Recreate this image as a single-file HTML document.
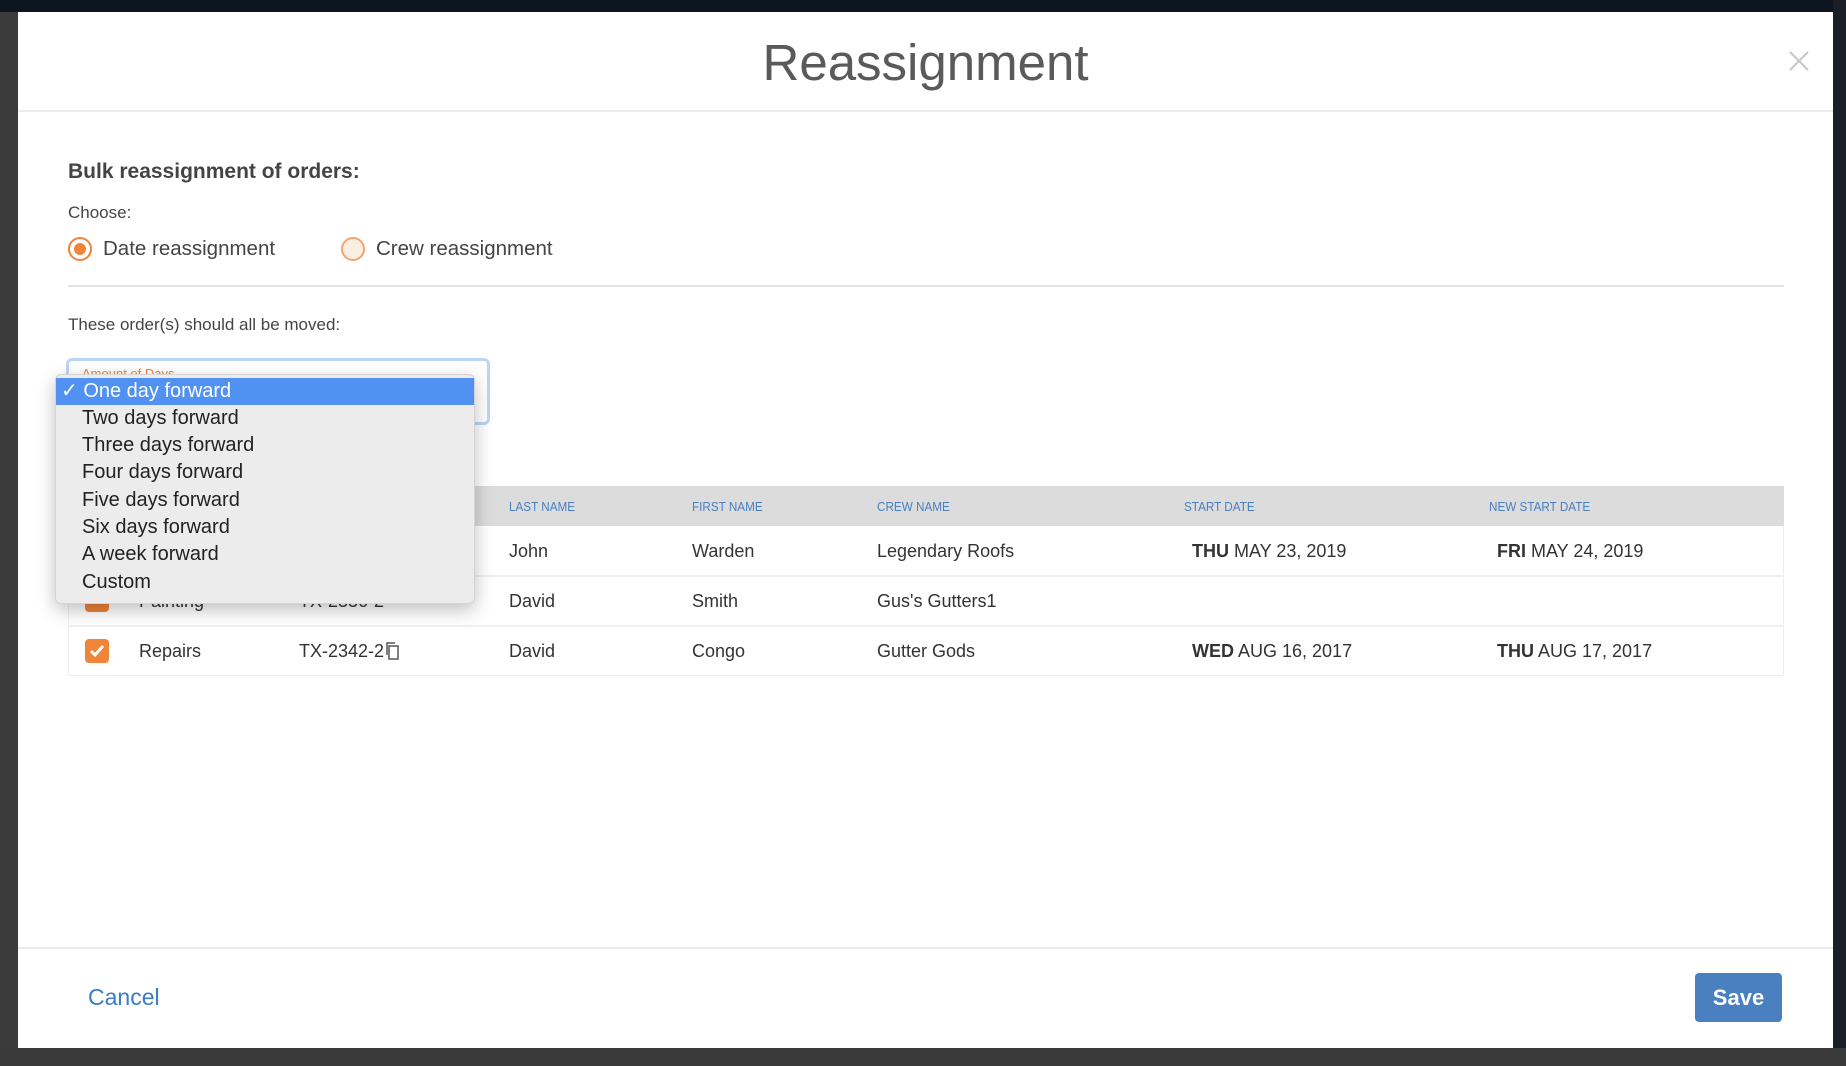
<!DOCTYPE html>
<html><head><meta charset="utf-8"><style>
*{margin:0;padding:0;box-sizing:border-box}
body{width:1846px;height:1066px;overflow:hidden;background:#3b3b3b;font-family:"Liberation Sans",sans-serif;position:relative;color:#333}
.a{position:absolute;white-space:nowrap}
#top{left:0;top:0;width:1846px;height:12px;background:#0d1520}
#modal{left:18px;top:12px;width:1815px;height:1036px;background:#fff}
.t{font-size:18px;color:#333;line-height:20px}
.h{font-size:13px;color:#4a7fc0;line-height:14px;transform:scaleX(.9);transform-origin:left}
.d b{font-weight:bold}
.ck{width:24px;height:24px;border-radius:4px;background:#f08437}
.dd{font-size:20px;line-height:27px;color:#222;left:82px}
</style></head><body>
<div class="a" id="top"></div>
<div class="a" style="left:1833px;top:0;width:13px;height:1066px;background:#1a1f27"></div>
<div class="a" style="left:0;top:1048px;width:1846px;height:18px;background:#3a3a3a"></div>
<div class="a" id="modal"></div>
<div class="a" style="left:18px;top:32px;width:1815px;text-align:center;font-size:51px;font-weight:normal;color:#5a5a5a;line-height:62px;letter-spacing:0">Reassignment</div>
<svg class="a" style="left:1789px;top:51px" width="20" height="20"><path d="M1 1L19 19M19 1L1 19" stroke="#c8c8c8" stroke-width="2"/></svg>
<div class="a" style="left:18px;top:110px;width:1815px;height:2px;background:#ececec"></div>
<div class="a" style="left:68px;top:160px;font-size:21px;font-weight:bold;color:#444">Bulk reassignment of orders:</div>
<div class="a" style="left:68px;top:203px;font-size:17px;color:#444">Choose:</div>
<div class="a" style="left:68px;top:237px;width:24px;height:24px;border-radius:50%;border:2px solid #f08437;background:#fff"></div>
<div class="a" style="left:74px;top:243px;width:12px;height:12px;border-radius:50%;background:#f08437"></div>
<div class="a" style="left:103px;top:237px;font-size:20.5px;color:#444">Date reassignment</div>
<div class="a" style="left:341px;top:237px;width:24px;height:24px;border-radius:50%;border:2px solid #f3a570;background:#fdeee4"></div>
<div class="a" style="left:376px;top:237px;font-size:20.5px;color:#444">Crew reassignment</div>
<div class="a" style="left:68px;top:285px;width:1716px;height:2px;background:#e3e3e3"></div>
<div class="a" style="left:68px;top:315px;font-size:17px;color:#444">These order(s) should all be moved:</div>
<div class="a" style="left:66px;top:358px;width:424px;height:67px;border:3px solid #bcd4f6;border-radius:6px;background:#fff"></div>
<div class="a" style="left:82px;top:366px;font-size:13px;color:#f08437">Amount of Days</div>
<div class="a" style="left:68px;top:486px;width:1716px;height:40px;background:#dcdcdc"></div>
<div class="a h" style="left:509px;top:500px">LAST NAME</div>
<div class="a h" style="left:692px;top:500px">FIRST NAME</div>
<div class="a h" style="left:877px;top:500px">CREW NAME</div>
<div class="a h" style="left:1184px;top:500px">START DATE</div>
<div class="a h" style="left:1489px;top:500px">NEW START DATE</div>
<div class="a" style="left:68px;top:526px;width:1716px;height:150px;border:1px solid #eee;border-top:none"></div>
<div class="a" style="left:68px;top:575px;width:1716px;height:2px;background:#f0f0f0"></div>
<div class="a" style="left:68px;top:625px;width:1716px;height:2px;background:#f0f0f0"></div>
<div class="a t" style="left:509px;top:541px">John</div>
<div class="a t" style="left:692px;top:541px">Warden</div>
<div class="a t" style="left:877px;top:541px">Legendary Roofs</div>
<div class="a t d" style="left:1192px;top:541px"><b>THU</b> MAY 23, 2019</div>
<div class="a t d" style="left:1497px;top:541px"><b>FRI</b> MAY 24, 2019</div>
<div class="a ck" style="left:85px;top:588px"></div>
<div class="a t" style="left:139px;top:591px">Painting</div>
<div class="a t" style="left:299px;top:591px">TX-2336-2</div>
<div class="a t" style="left:509px;top:591px">David</div>
<div class="a t" style="left:692px;top:591px">Smith</div>
<div class="a t" style="left:877px;top:591px">Gus's Gutters1</div>
<div class="a ck" style="left:85px;top:639px"></div>
<svg class="a" style="left:85px;top:639px" width="24" height="24"><path d="M6 12l4 4 8-9" stroke="#fff" stroke-width="3" fill="none"/></svg>
<div class="a t" style="left:139px;top:641px">Repairs</div>
<div class="a t" style="left:299px;top:641px">TX-2342-2</div>
<svg class="a" style="left:384px;top:641px" width="16" height="20"><rect x="5" y="5" width="9" height="13" fill="none" stroke="#555" stroke-width="1.5"/><path d="M3 14V2h8" fill="none" stroke="#555" stroke-width="1.5"/></svg>
<div class="a t" style="left:509px;top:641px">David</div>
<div class="a t" style="left:692px;top:641px">Congo</div>
<div class="a t" style="left:877px;top:641px">Gutter Gods</div>
<div class="a t d" style="left:1192px;top:641px"><b>WED</b> AUG 16, 2017</div>
<div class="a t d" style="left:1497px;top:641px"><b>THU</b> AUG 17, 2017</div>
<div class="a" style="left:55px;top:374px;width:420px;height:230px;background:#ececec;border:1px solid #d4d4d4;border-radius:6px;box-shadow:0 6px 18px rgba(0,0,0,.25)"></div>
<div class="a" style="left:56px;top:378px;width:418px;height:27px;background:#5091f1"></div>
<div class="a dd" style="left:61px;top:378px;color:#fff">✓ One day forward</div>
<div class="a dd" style="top:405px">Two days forward</div>
<div class="a dd" style="top:432px">Three days forward</div>
<div class="a dd" style="top:459px">Four days forward</div>
<div class="a dd" style="top:487px">Five days forward</div>
<div class="a dd" style="top:514px">Six days forward</div>
<div class="a dd" style="top:541px">A week forward</div>
<div class="a dd" style="top:569px">Custom</div>
<div class="a" style="left:18px;top:947px;width:1815px;height:2px;background:#ececec"></div>
<div class="a" style="left:88px;top:984px;font-size:23px;color:#3a7bc8">Cancel</div>
<div class="a" style="left:1695px;top:973px;width:87px;height:49px;background:#4a80c0;border-radius:4px;color:#fff;font-size:22px;font-weight:bold;text-align:center;line-height:49px">Save</div>
</body></html>
